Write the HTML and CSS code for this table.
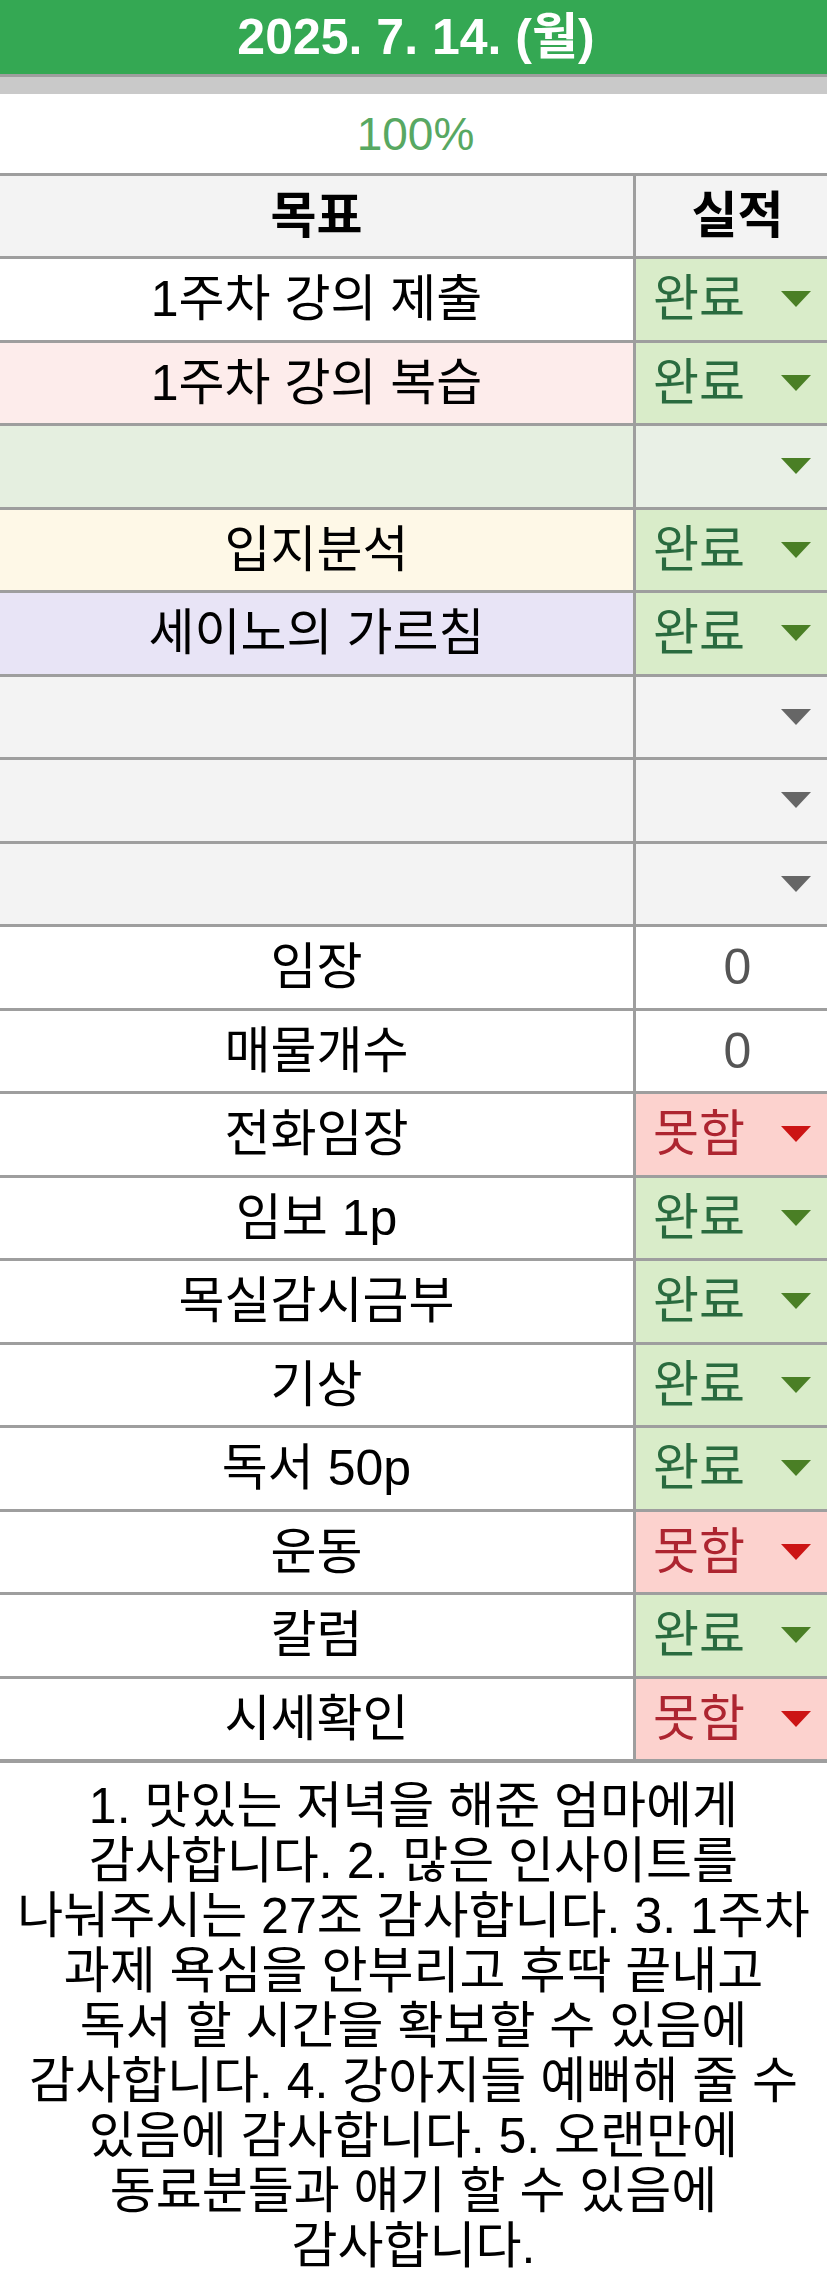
FILE: index.html
```html
<!DOCTYPE html>
<html lang="ko">
<head>
<meta charset="utf-8">
<title>2025. 7. 14. (월)</title>
<link rel="stylesheet" href="styles.css">
</head>
<body>
<div class="sheet">
  <div class="title">2025. 7. 14. (월)</div>
  <div class="band"></div>
  <div class="pct">100%</div>
  <div class="grid">
    <div class="cell head">목표</div><div class="cell head right-col center">실적</div>

    <div class="cell bg-white">1주차 강의 제출</div><div class="cell right-col done"><span>완료</span><i class="tri"></i></div>
    <div class="cell bg-pink">1주차 강의 복습</div><div class="cell right-col done"><span>완료</span><i class="tri"></i></div>
    <div class="cell bg-green"></div><div class="cell right-col bg-green2"><i class="tri tri-green"></i></div>
    <div class="cell bg-yellow">입지분석</div><div class="cell right-col done"><span>완료</span><i class="tri"></i></div>
    <div class="cell bg-lav">세이노의 가르침</div><div class="cell right-col done"><span>완료</span><i class="tri"></i></div>
    <div class="cell bg-gray"></div><div class="cell right-col bg-gray"><i class="tri tri-gray"></i></div>
    <div class="cell bg-gray"></div><div class="cell right-col bg-gray"><i class="tri tri-gray"></i></div>
    <div class="cell bg-gray"></div><div class="cell right-col bg-gray"><i class="tri tri-gray"></i></div>
    <div class="cell">임장</div><div class="cell right-col num">0</div>
    <div class="cell">매물개수</div><div class="cell right-col num">0</div>
    <div class="cell">전화임장</div><div class="cell right-col fail"><span>못함</span><i class="tri"></i></div>
    <div class="cell">임보 1p</div><div class="cell right-col done"><span>완료</span><i class="tri"></i></div>
    <div class="cell">목실감시금부</div><div class="cell right-col done"><span>완료</span><i class="tri"></i></div>
    <div class="cell">기상</div><div class="cell right-col done"><span>완료</span><i class="tri"></i></div>
    <div class="cell">독서 50p</div><div class="cell right-col done"><span>완료</span><i class="tri"></i></div>
    <div class="cell">운동</div><div class="cell right-col fail"><span>못함</span><i class="tri"></i></div>
    <div class="cell">칼럼</div><div class="cell right-col done"><span>완료</span><i class="tri"></i></div>
    <div class="cell">시세확인</div><div class="cell right-col fail"><span>못함</span><i class="tri"></i></div>
  </div>
  <div class="notes">1. 맛있는 저녁을 해준 엄마에게<br>감사합니다. 2. 많은 인사이트를<br>나눠주시는 27조 감사합니다. 3. 1주차<br>과제 욕심을 안부리고 후딱 끝내고<br>독서 할 시간을 확보할 수 있음에<br>감사합니다. 4. 강아지들 예뻐해 줄 수<br>있음에 감사합니다. 5. 오랜만에<br>동료분들과 얘기 할 수 있음에<br>감사합니다.</div>
</div>
</body>
</html>
```
FILE: styles.css
```css
html, body {
  margin: 0;
  padding: 0;
  background: #ffffff;
}
body {
  font-family: "Liberation Sans", "Noto Sans CJK KR", sans-serif;
  color: #000;
}
.sheet {
  width: 827px;
  height: 2275px;
  overflow: hidden;
}
.title {
  height: 74px;
  background: #34a853;
  color: #fff;
  font-weight: bold;
  font-size: 50px;
  display: flex;
  align-items: center;
  justify-content: center;
  line-height: 1;
  padding-left: 5px;
  box-sizing: border-box;
}
.band {
  height: 20px;
  box-sizing: border-box;
  background: #c9c9c9;
  border-top: 3px solid #9e9e9e;
}
.pct {
  height: 79px;
  display: flex;
  align-items: center;
  justify-content: center;
  font-size: 46px;
  color: #58a862;
  line-height: 1;
  padding-left: 4px;
}
.grid {
  display: grid;
  grid-template-columns: 636px 191px;
  grid-template-rows: 83px repeat(18, 83.5px);
}
.cell {
  box-sizing: border-box;
  border-top: 3px solid #9e9e9e;
  border-right: 3px solid #9e9e9e;
  display: flex;
  align-items: center;
  justify-content: center;
  font-size: 50px;
  line-height: 1;
  background: #fff;
  overflow: hidden;
  white-space: nowrap;
}
.cell.right-col {
  border-right: none;
  justify-content: flex-start;
  padding: 0 16px 0 17px;
}
.cell.head {
  background: #f3f3f3;
  font-weight: bold;
}
.cell.head.center {
  justify-content: center;
  padding: 0 0 0 12px;
}
.bg-white { background: #fff; }
.bg-pink { background: #fdeceb !important; }
.bg-green { background: #e5efe0 !important; }
.bg-green2 { background: #e9f0e6 !important; }
.bg-yellow { background: #fef8e7 !important; }
.bg-lav { background: #e8e4f6 !important; }
.bg-gray { background: #f3f3f3 !important; }

.done {
  background: #d9ecc9 !important;
  color: #2a6b3f;
}
.fail {
  background: #fcd2ce !important;
  color: #ad2530;
}
.num {
  justify-content: center !important;
  padding: 0 0 0 12px !important;
  color: #555;
}
.tri {
  display: block;
  width: 0;
  height: 0;
  margin-left: auto;
  border-left: 15px solid transparent;
  border-right: 15px solid transparent;
  border-top: 16px solid #4a7f25;
}
.fail .tri { border-top-color: #cc1414; }
.tri-green { border-top-color: #4a7f25; }
.tri-gray { border-top-color: #666; }

.notes {
  border-top: 4px solid #9e9e9e;
  box-sizing: border-box;
  text-align: center;
  font-family: "Liberation Sans", "Noto Sans CJK KR", sans-serif;
  font-size: 50px;
  line-height: 55px;
  padding-top: 16px;
  white-space: nowrap;
}
```
